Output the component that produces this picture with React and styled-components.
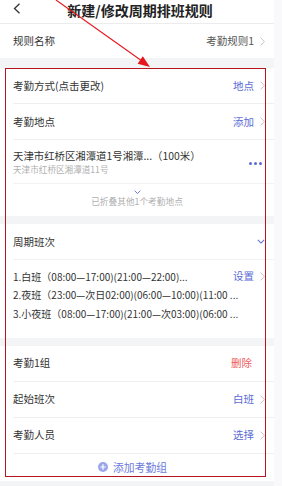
import styled, { createGlobalStyle } from "styled-components";

const GlobalStyle = createGlobalStyle`
  html, body {
    margin: 0;
    padding: 0;
    background: #f9f9fb;
  }
  body {
    font-family: "Noto Sans CJK SC", "Noto Sans", sans-serif;
    color: #333;
  }
`;

const Screen = styled.div`
  position: relative;
  width: 274px;
  height: 486px;
  background: #f3f4f6;
  overflow: hidden;
`;

const Header = styled.div`
  height: 23px;
  display: flex;
  align-items: flex-start;
  justify-content: center;
  background: #fff;
  border-bottom: 1px solid #ececec;
  position: relative;
  padding-left: 6px;
  box-sizing: content-box;
`;

const Back = styled.svg`
  position: absolute;
  left: 13px;
  top: 3px;
`;

const Title = styled.div`
  font-size: 14px;
  font-weight: 700;
  line-height: 17px;
  color: #222;
  padding-top: 1.6px;
`;

const Section = styled.div`
  background: #fff;
  padding-left: 13px;
  margin-top: ${(p) => p.$gap || 0}px;
`;

const Row = styled.div`
  display: flex;
  align-items: center;
  justify-content: space-between;
  height: ${(p) => p.$h || 35}px;
  padding-right: 9px;
  border-bottom: ${(p) => (p.$last ? "none" : "1px solid #efefef")};
`;

const Label = styled.span`
  font-size: 10.5px;
  line-height: 14px;
  color: #333;
`;

const Value = styled.span`
  display: flex;
  align-items: center;
  gap: 6px;
  font-size: 10.5px;
  line-height: 14px;
  color: ${(p) => (p.$danger ? "#ef5b5b" : p.$plain ? "#555" : "#5a6bd6")};
  margin-right: ${(p) => (p.$noArrow ? 13 : 0)}px;
`;

const Place = styled.div`
  display: flex;
  align-items: center;
  justify-content: space-between;
  padding: 9px 12px 8px 0;
  border-bottom: 1px solid #f2f2f2;
`;

const PlaceText = styled.div`
  display: flex;
  flex-direction: column;
  gap: 1px;
`;

const PlaceTitle = styled.span`
  font-size: 10.4px;
  line-height: 14px;
  color: #333;
  white-space: nowrap;
`;

const PlaceSub = styled.span`
  font-size: 8.6px;
  line-height: 11px;
  color: #b0b0b0;
`;

const Dots = styled.span`
  display: flex;
  gap: 2px;
  margin-top: 2px;
  span {
    width: 3px;
    height: 3px;
    border-radius: 50%;
    background: #5a6bd6;
  }
`;

const Folded = styled.div`
  height: 32px;
  display: flex;
  flex-direction: column;
  align-items: center;
  padding-right: 13px;
  padding-top: 6px;
  box-sizing: border-box;
`;

const FoldText = styled.span`
  font-size: 8.7px;
  line-height: 12px;
  color: #b0b0b0;
  margin-top: 2px;
`;

const ShiftList = styled.div`
  padding: 7px 9px 15px 0;
  border-top: 1px solid #f2f2f2;
`;

const Shift = styled.div`
  display: flex;
  align-items: center;
  justify-content: space-between;
  height: 18.5px;
  font-size: 10px;
  color: #333;
  white-space: nowrap;
  overflow: hidden;
`;

const AddRow = styled.div`
  height: 27px;
  display: flex;
  align-items: center;
  justify-content: center;
  gap: 5px;
  padding-right: 22px;
  font-size: 10.8px;
  color: #6b7bdc;
`;

const Bottom = styled.div`
  height: 8px;
`;

const Frame = styled.div`
  position: absolute;
  left: 5px;
  top: 68px;
  width: 259px;
  height: 407px;
  border: 1.5px solid #b8141f;
  pointer-events: none;
`;

const Arrow = styled.svg`
  position: absolute;
  left: 0;
  top: 0;
  pointer-events: none;
`;

const Chevron = () => (
  <svg width="5" height="9" viewBox="0 0 5 9">
    <path d="M0.6 0.6 L4.3 4.5 L0.6 8.4" fill="none" stroke="#bdbdbd" strokeWidth="0.9" />
  </svg>
);

const Down = ({ w = 8 }) => (
  <svg width={w} height={w * 0.6} viewBox="0 0 10 6">
    <path d="M1 1 L5 5 L9 1" fill="none" stroke="#5a6bd6" strokeWidth="1.3" />
  </svg>
);

export default function App() {
  return (
    <>
      <GlobalStyle />
      <Screen>
        <Header>
          <Back width="8" height="11" viewBox="0 0 8 11">
            <path d="M6.5 0.8 L1.5 5.5 L6.5 10.2" fill="none" stroke="#333" strokeWidth="1.3" />
          </Back>
          <Title>新建/修改周期排班规则</Title>
        </Header>

        <Section>
          <Row $h={34} $last>
            <Label>规则名称</Label>
            <Value $plain>
              考勤规则1 <Chevron />
            </Value>
          </Row>
        </Section>

        <Section $gap={10}>
          <Row>
            <Label>考勤方式(点击更改)</Label>
            <Value>
              地点 <Chevron />
            </Value>
          </Row>
          <Row $h={35}>
            <Label>考勤地点</Label>
            <Value>
              添加 <Chevron />
            </Value>
          </Row>
          <Place>
            <PlaceText>
              <PlaceTitle>天津市红桥区湘潭道1号湘潭...（100米）</PlaceTitle>
              <PlaceSub>天津市红桥区湘潭道11号</PlaceSub>
            </PlaceText>
            <Dots>
              <span />
              <span />
              <span />
            </Dots>
          </Place>
          <Folded>
            <Down w={7} />
            <FoldText>已折叠其他1个考勤地点</FoldText>
          </Folded>
        </Section>

        <Section $gap={8}>
          <Row $last>
            <Label>周期班次</Label>
            <Value>
              <Down w={8} />
            </Value>
          </Row>
          <ShiftList>
            <Shift>
              <span>1.白班（08:00—17:00)(21:00—22:00)...</span>
              <Value>
                设置 <Chevron />
              </Value>
            </Shift>
            <Shift>
              <span>2.夜班（23:00—次日02:00)(06:00—10:00)(11:00 ...</span>
            </Shift>
            <Shift>
              <span>3.小夜班（08:00—17:00)(21:00—次03:00)(06:00 ...</span>
            </Shift>
          </ShiftList>
        </Section>

        <Section $gap={8}>
          <Row>
            <Label>考勤1组</Label>
            <Value $danger $noArrow>
              删除
            </Value>
          </Row>
          <Row>
            <Label>起始班次</Label>
            <Value>
              白班 <Chevron />
            </Value>
          </Row>
          <Row>
            <Label>考勤人员</Label>
            <Value>
              选择 <Chevron />
            </Value>
          </Row>
          <AddRow>
            <svg width="10" height="10" viewBox="0 0 10 10">
              <circle cx="5" cy="5" r="5" fill="#9aa6ea" />
              <path d="M5 2.3 V7.7 M2.3 5 H7.7" stroke="#fff" strokeWidth="1.2" />
            </svg>
            添加考勤组
          </AddRow>
        </Section>
        <Bottom />

        <Frame />
        <Arrow width="274" height="80" viewBox="0 0 274 80">
          <line x1="56" y1="0" x2="142" y2="61" stroke="#e5171d" strokeWidth="1.1" />
          <polygon points="150,67 137.6,63.7 142.8,56.3" fill="#e5171d" />
        </Arrow>
      </Screen>
    </>
  );
}
